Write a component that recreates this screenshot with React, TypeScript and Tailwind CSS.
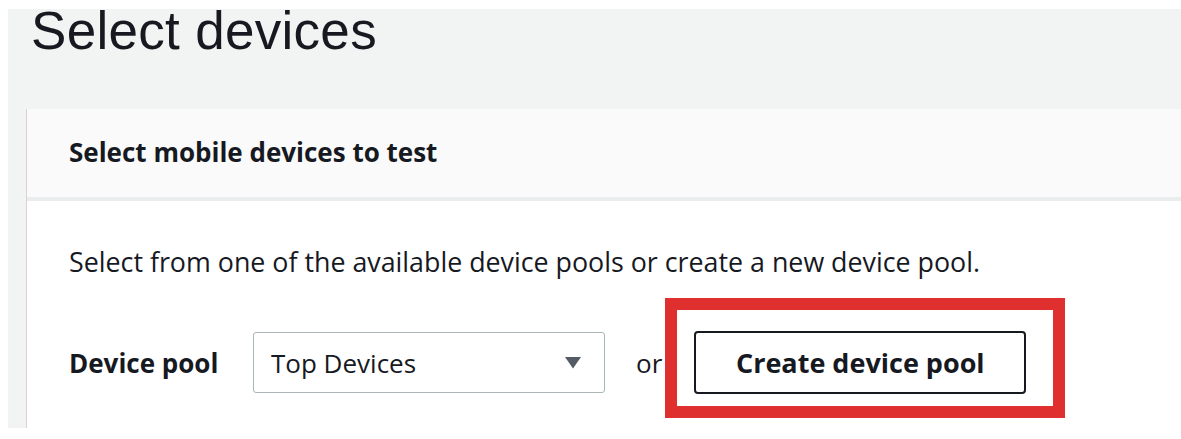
import React from "react"

const font = { fontFamily: '"Open Sans", "Noto Sans", Arial, sans-serif' }
const titleFont = { fontFamily: '"Liberation Sans", Arial, sans-serif' }

function CaretDown() {
  return (
    <svg width="18" height="13" viewBox="0 0 18 13" aria-hidden="true">
      <path d="M1 1h16L9 12.5z" fill="#545b64" />
    </svg>
  )
}

export default function App() {
  return (
    <div className="w-[1181px] h-[439px] overflow-hidden bg-white pt-[9px] pl-[8px]" style={font}>
      <div className="flex h-[419px] flex-col bg-[#f2f3f3] pl-[18px]">
        {/* page title */}
        <h1
          className="-mt-[9px] ml-[5px] text-[53px] leading-[61px] tracking-[0.3px] font-normal text-[#16191f]"
          style={titleFont}
        >
          Select devices
        </h1>

        {/* card */}
        <div className="mt-[48px] flex flex-1 flex-col border-l border-[#ddd2cc] bg-white">
          <div className="h-[88px] bg-[#fafafa] pl-[42px] pt-[25px]">
            <h2 className="text-[26px] leading-[36px] font-bold text-[#16191f]">Select mobile devices to test</h2>
          </div>
          <div className="h-[4px] bg-[#eaeded]" />

          <div className="flex-1 pl-[42px] pt-[43px]">
            <p className="text-[26.8px] leading-[36px] text-[#16191f]">
              Select from one of the available device pools or create a new device pool.
            </p>

            <div className="mt-[52px] flex items-center">
              <label className="w-[184px] text-[26px] leading-[36px] font-bold text-[#16191f]">Device pool</label>

              <div className="flex h-[61px] w-[352px] items-center justify-between rounded-[3px] border border-[#aab7b8] bg-white pl-[17px] pr-[22px]">
                <span className="text-[26px] leading-[36px] text-[#16191f]">Top Devices</span>
                <CaretDown />
              </div>

              <span className="ml-[31px] text-[26px] leading-[36px] text-[#16191f]">or</span>

              {/* highlight around the button */}
              <div className="-mt-[34px] -mb-[25px] ml-[3px] border-[12px] border-[#e02f2f] pt-[21px] pb-[12px] pl-[17px] pr-[27px]">
                <button className="flex h-[63px] w-[332px] items-center justify-center rounded-[4px] border-2 border-[#16191f] bg-white text-[27px] leading-[36px] font-bold text-[#16191f]">
                  Create device pool
                </button>
              </div>
            </div>
          </div>
        </div>
      </div>
    </div>
  )
}
